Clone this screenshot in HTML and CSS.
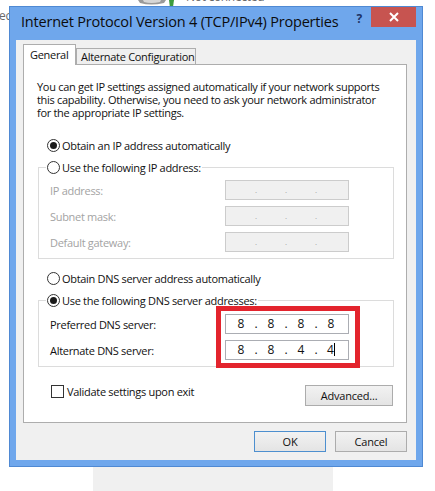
FILE: index.html
```html
<!DOCTYPE html>
<html lang="en">
<head>
    <meta charset="UTF-8">
    <meta name="viewport" content="width=device-width, initial-scale=1.0">
    <title>Internet Protocol Version 4 (TCP/IPv4) Properties</title>
    <link rel="stylesheet" href="styles.css">
</head>
<body>
    <!-- BEGIN::desktop behind the dialog -->
    <span class="behind behind-left">ec</span>
    <svg class="behind behind-icon" width="40" height="9" viewBox="0 0 40 9">
        <path d="M1 0 L29 0 L27 3 Q14 6 3 3 Z" fill="#9a9a9a"/>
        <path d="M6 0 L24 0 L23 2 Q14 4 7 2 Z" fill="#d6d6d6"/>
        <path d="M32 0 L37 0 L36 7 L33 8 Z" fill="#3d9b3d"/>
    </svg>
    <span class="behind behind-status">Not connected</span>
    <!-- END::desktop -->

    <!-- BEGIN::window -->
    <div class="window">
        <div class="titlebar">
            <span class="title">Internet Protocol Version 4 (TCP/IPv4) Properties</span>
            <span class="help">?</span>
            <span class="close">
                <svg width="10" height="10" viewBox="0 0 10 10">
                    <path d="M1 1 L9 9 M9 1 L1 9" stroke="#fff" stroke-width="2"/>
                </svg>
            </span>
        </div>
        <div class="client">
            <!-- BEGIN::tabs -->
            <div class="tabs">
                <div class="tab tab-active">General</div>
                <div class="tab">Alternate Configuration</div>
            </div>
            <!-- END::tabs -->
            <!-- BEGIN::panel -->
            <div class="panel">
                <p class="intro">You can get IP settings assigned automatically if your network supports<br>this capability. Otherwise, you need to ask your network administrator<br>for the appropriate IP settings.</p>

                <div class="option option-ip"><span class="radio checked"></span>Obtain an IP address automatically</div>
                <fieldset class="group group-ip">
                    <legend><span class="option"><span class="radio"></span>Use the following IP address:</span></legend>
                    <div class="field disabled">
                        <span class="label">IP address:</span>
                        <span class="ipbox"><span class="octet"></span><span class="dot">.</span><span class="octet"></span><span class="dot">.</span><span class="octet"></span><span class="dot">.</span><span class="octet"></span></span>
                    </div>
                    <div class="field disabled">
                        <span class="label">Subnet mask:</span>
                        <span class="ipbox"><span class="octet"></span><span class="dot">.</span><span class="octet"></span><span class="dot">.</span><span class="octet"></span><span class="dot">.</span><span class="octet"></span></span>
                    </div>
                    <div class="field disabled">
                        <span class="label">Default gateway:</span>
                        <span class="ipbox"><span class="octet"></span><span class="dot">.</span><span class="octet"></span><span class="dot">.</span><span class="octet"></span><span class="dot">.</span><span class="octet"></span></span>
                    </div>
                </fieldset>

                <div class="option option-dns"><span class="radio"></span>Obtain DNS server address automatically</div>
                <fieldset class="group group-dns">
                    <legend><span class="option"><span class="radio checked"></span>Use the following DNS server addresses:</span></legend>
                    <div class="field">
                        <span class="label">Preferred DNS server:</span>
                        <span class="ipbox"><span class="octet">8</span><span class="dot">.</span><span class="octet">8</span><span class="dot">.</span><span class="octet">8</span><span class="dot">.</span><span class="octet">8</span></span>
                    </div>
                    <div class="field">
                        <span class="label">Alternate DNS server:</span>
                        <span class="ipbox"><span class="octet">8</span><span class="dot">.</span><span class="octet">8</span><span class="dot">.</span><span class="octet">4</span><span class="dot">.</span><span class="octet">4<span class="caret"></span></span></span>
                    </div>
                </fieldset>

                <div class="panel-footer">
                    <div class="check-row"><span class="checkbox"></span>Validate settings upon exit</div>
                    <button class="btn btn-advanced">Advanced...</button>
                </div>

                <!-- red annotation round the DNS boxes -->
                <div class="highlight"></div>
            </div>
            <!-- END::panel -->
            <div class="dialog-buttons">
                <button class="btn btn-default">OK</button>
                <button class="btn">Cancel</button>
            </div>
        </div>
    </div>
    <!-- END::window -->
    <div class="peek"></div>
</body>
</html>
```

FILE: styles.css
```css
*{
    margin: 0;
    padding: 0;
    box-sizing: border-box;
}

body{
    background: #fff;
    font-family: 'Open Sans', 'Noto Sans', sans-serif;
    font-size: 11px;
    letter-spacing: -0.3px;
    white-space: nowrap;
    color: #111;
    width: 435px;
    height: 491px;
    overflow: hidden;
    position: relative;
}

/* things on the desktop, under the window */
.behind{
    position: absolute;
    color: #6a6a6a;
    font-size: 12px;
    line-height: 14px;
}

.behind-left{
    left: -1px;
    top: 9px;
}

.behind-icon{
    left: 137px;
    top: 0;
}

.behind-status{
    left: 186px;
    top: -10px;
}

.peek{
    position: absolute;
    left: 93px;
    top: 460px;
    width: 240px;
    height: 31px;
    background: #f0f0f0;
}

/* window frame */
.window{
    position: relative;
    z-index: 1;
    width: 414px;
    height: 461px;
    margin: 6px 0 0 9px;
    background: #6fa7ec;
    border: 1px solid #4f89d3;
    padding: 0 6px 6px;
}

.titlebar{
    height: 33px;
    display: flex;
    align-items: flex-start;
}

.title{
    flex: 1;
    margin: 5px 0 0 5px;
    font-size: 14.5px;
    letter-spacing: -0.2px;
    line-height: 20px;
    color: #0c0c0c;
}

.help{
    margin: 5px 9px 0 0;
    font-size: 12px;
    line-height: 14px;
    font-weight: 700;
    color: #1d3467;
}

.close{
    width: 45px;
    height: 20px;
    background: #c75450;
    display: flex;
    align-items: center;
    justify-content: center;
}

.client{
    height: 420px;
    background: #f0f0f0;
    padding: 4px 9px 0 7px;
}

/* tabs */
.tabs{
    display: flex;
    align-items: flex-end;
    height: 20px;
}

.tab{
    height: 16px;
    line-height: 15px;
    padding: 0 4px;
    border: 1px solid #adadad;
    border-bottom: none;
    background: #efefef;
    color: #111;
}

.tab + .tab{
    width: 120px;
}

.tab-active{
    position: relative;
    z-index: 2;
    width: 53px;
    height: 21px;
    margin-bottom: -1px;
    line-height: 19px;
    padding-left: 6px;
    background: #fff;
}

/* panel */
.panel{
    position: relative;
    height: 359px;
    background: #fff;
    border: 1px solid #adadad;
    padding: 15px 12px 0 14px;
}

.intro{
    line-height: 13px;
    margin-left: -1px;
}

.option{
    display: flex;
    align-items: center;
    height: 16px;
}

.option-ip{
    margin: 18px 0 6px 9px;
}

.option-dns{
    margin: 11px 0 6px 9px;
}

.radio{
    width: 13px;
    height: 13px;
    border-radius: 50%;
    border: 1px solid #333;
    background: #fff;
    margin-right: 2px;
    display: flex;
    align-items: center;
    justify-content: center;
}

.radio.checked::after{
    content: "";
    width: 7px;
    height: 7px;
    border-radius: 50%;
    background: #1b1b1b;
}

.group{
    border: 1px solid #dcdcdc;
    padding: 0 0 6px 11px;
}

.group legend{
    margin-left: -4px;
    padding: 0 1px;
}

.group-ip .field:first-of-type{
    margin-top: 5px;
}

.field{
    display: flex;
    align-items: center;
    height: 20px;
    margin-top: 6px;
}

.label{
    width: 175px;
}

.ipbox{
    display: flex;
    width: 124px;
    height: 20px;
    border: 1px solid #abadb3;
    background: #fff;
    padding-left: 2px;
    line-height: 18px;
    font-size: 12px;
    letter-spacing: 0;
}

.octet{
    width: 26px;
    text-align: center;
}

.dot{
    width: 4px;
    text-align: center;
}

.caret{
    display: inline-block;
    width: 1px;
    height: 13px;
    background: #000;
    vertical-align: -2px;
}

.disabled{
    color: #a3a3a3;
}

.disabled .ipbox{
    background: #f0f0f0;
    border-color: #cccccc;
    font-size: 8px;
}

.panel-footer{
    display: flex;
    justify-content: space-between;
    align-items: flex-start;
    margin: 18px 0 0 13px;
    padding-right: 1px;
}

.check-row{
    display: flex;
    align-items: center;
    height: 13px;
    line-height: 13px;
}

.checkbox{
    width: 13px;
    height: 13px;
    border: 1px solid #333;
    background: #fff;
    margin-right: 3px;
}

.btn{
    font-family: inherit;
    font-size: 11px;
    letter-spacing: -0.2px;
    color: #111;
    height: 21px;
    border: 1px solid #acacac;
    background: linear-gradient(#f2f2f2, #e4e4e4);
}

.btn-advanced{
    width: 88px;
}

.highlight{
    position: absolute;
    left: 192px;
    top: 241px;
    width: 144px;
    height: 62px;
    border: 5px solid #e3242d;
}

.dialog-buttons{
    display: flex;
    justify-content: flex-end;
    gap: 9px;
    margin-top: 8px;
}

.dialog-buttons .btn{
    width: 72px;
    height: 21px;
}

.btn-default{
    border-color: #4d8fcf;
}
```
